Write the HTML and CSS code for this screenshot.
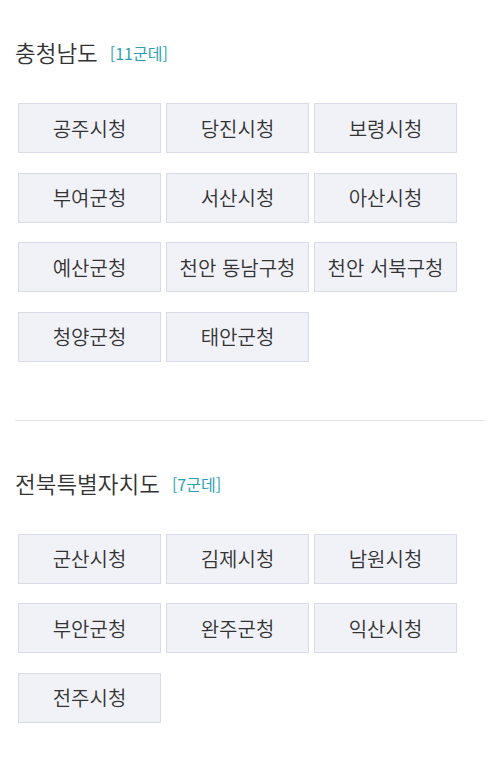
FILE: index.html
```html
<!DOCTYPE html>
<html lang="ko">
<head>
<meta charset="utf-8">
<link rel="stylesheet" href="styles.css">
</head>
<body>
<div class="wrap">
  <section class="region">
    <h2 class="title">충청남도 <span class="count">[11군데]</span></h2>
    <div class="grid">
      <a class="btn">공주시청</a>
      <a class="btn">당진시청</a>
      <a class="btn">보령시청</a>
      <a class="btn">부여군청</a>
      <a class="btn">서산시청</a>
      <a class="btn">아산시청</a>
      <a class="btn">예산군청</a>
      <a class="btn">천안 동남구청</a>
      <a class="btn">천안 서북구청</a>
      <a class="btn">청양군청</a>
      <a class="btn">태안군청</a>
    </div>
  </section>
  <hr class="divider">
  <section class="region">
    <h2 class="title">전북특별자치도 <span class="count">[7군데]</span></h2>
    <div class="grid">
      <a class="btn">군산시청</a>
      <a class="btn">김제시청</a>
      <a class="btn">남원시청</a>
      <a class="btn">부안군청</a>
      <a class="btn">완주군청</a>
      <a class="btn">익산시청</a>
      <a class="btn">전주시청</a>
    </div>
  </section>
</div>
</body>
</html>
```

FILE: styles.css
```css
* { box-sizing: border-box; }
body {
  margin: 0;
  background: #fff;
  font-family: "Noto Sans CJK KR", "Noto Sans", sans-serif;
  color: #333;
}
.wrap {
  padding: 37px 15px 0;
}
.title {
  display: flex;
  align-items: center;
  height: 30px;
  margin: 0;
  font-size: 22.5px;
  line-height: 30px;
  font-weight: 350;
  color: #333;
}
.count {
  font-size: 16px;
  line-height: 30px;
  font-weight: 400;
  color: #2aa1b3;
  margin-left: 12px;
  padding-top: 2px;
}
.grid {
  display: grid;
  grid-template-columns: repeat(3, 143px);
  column-gap: 5px;
  row-gap: 19.6px;
  margin: 36px 0 0 3px;
}
.btn {
  display: flex;
  align-items: center;
  justify-content: center;
  height: 50px;
  background: #f1f2f8;
  border: 1px solid #d8dbe7;
  font-size: 20px;
  font-weight: 350;
  color: #333;
}
.divider {
  border: 0;
  border-top: 1px solid #e4e4e4;
  margin: 58px 0 47px;
}
```
